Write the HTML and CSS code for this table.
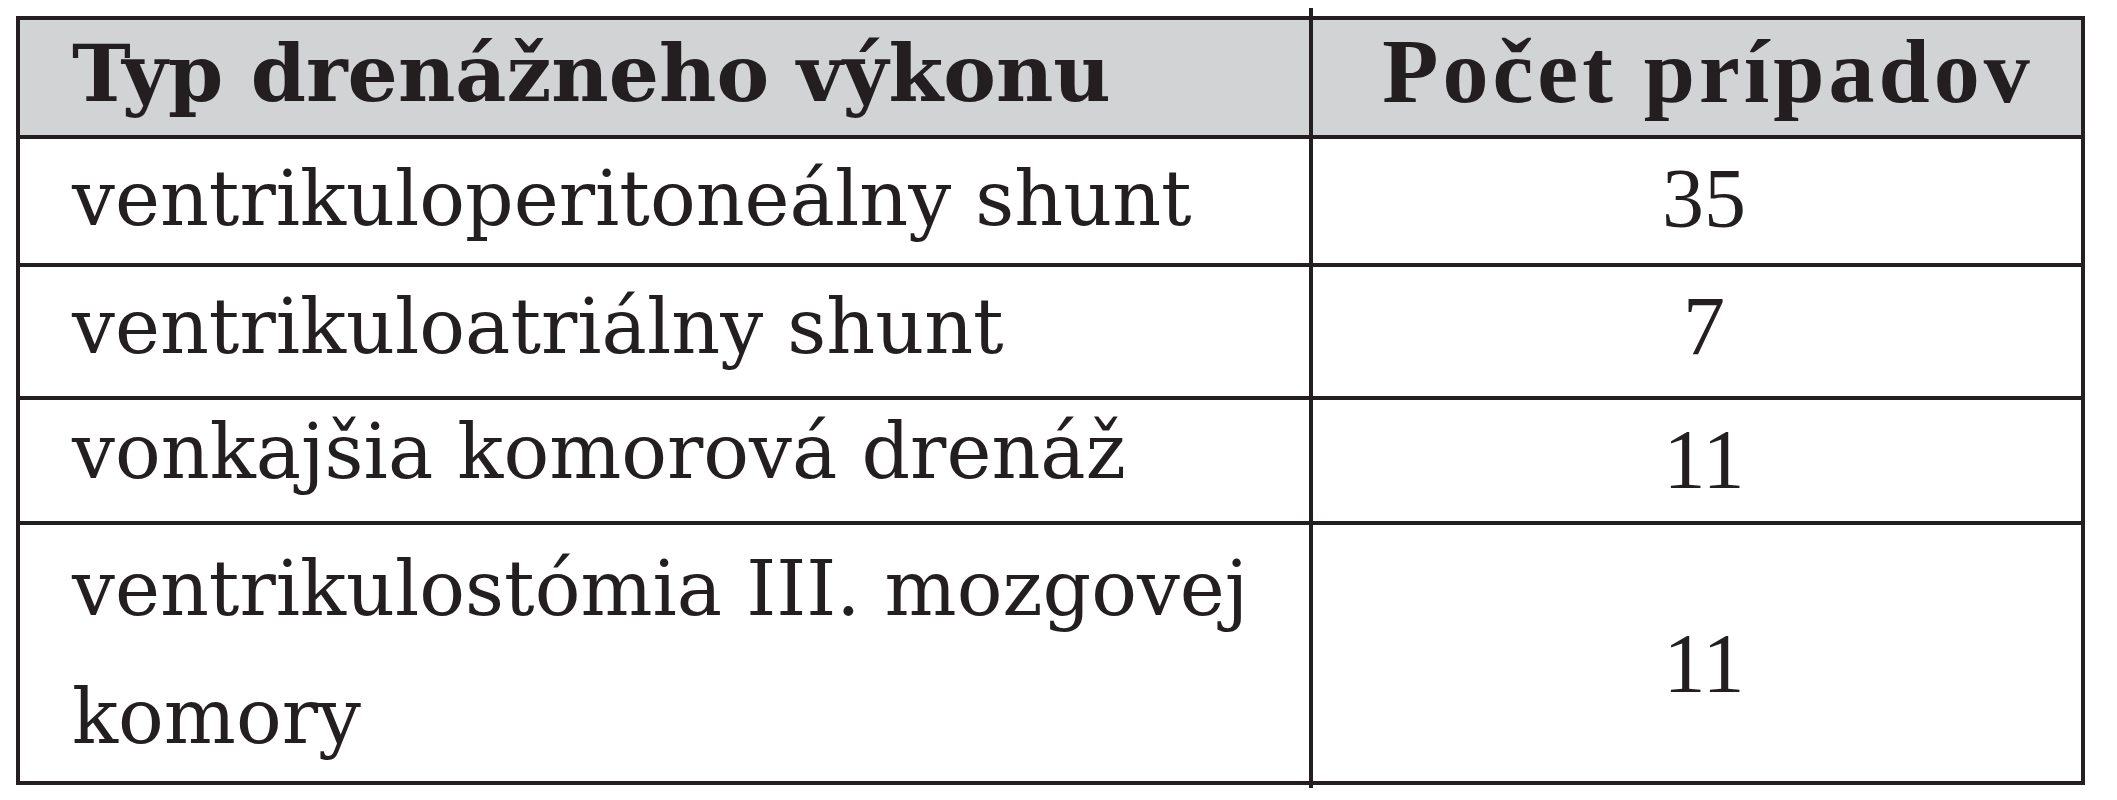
FILE: index.html
```html
<!DOCTYPE html>
<html lang="sk">
<head>
<meta charset="utf-8">
<title>Typ drenážneho výkonu</title>
<link rel="stylesheet" href="styles.css">
</head>
<body>
<div class="wrap">
  <table class="drain">
    <thead>
      <tr class="head">
        <th class="c1">Typ drenážneho výkonu</th>
        <th class="c2">Počet prípadov</th>
      </tr>
    </thead>
    <tbody>
      <tr class="r1">
        <td class="c1">ventrikuloperitoneálny shunt</td>
        <td class="c2 num">35</td>
      </tr>
      <tr class="r2">
        <td class="c1">ventrikuloatriálny shunt</td>
        <td class="c2 num">7</td>
      </tr>
      <tr class="r3">
        <td class="c1">vonkajšia komorová drenáž</td>
        <td class="c2 num">11</td>
      </tr>
      <tr class="r4">
        <td class="c1 two">ventrikulostómia III. mozgovej<br>komory</td>
        <td class="c2 num low">11</td>
      </tr>
    </tbody>
  </table>
</div>
</body>
</html>
```

FILE: styles.css
```css
html, body {
  margin: 0;
  padding: 0;
  background: #ffffff;
}

body {
  width: 2117px;
  height: 800px;
  overflow: hidden;
}

.wrap {
  position: relative;
  padding: 16px 0 0 16px;
}

/* vertical divider that runs past the table frame */
.wrap::after {
  content: "";
  position: absolute;
  left: 1309px;
  top: 8px;
  width: 4px;
  height: 780px;
  background: #231f20;
}

.drain {
  box-sizing: border-box;
  width: 2069px;
  border: 4px solid #231f20;
  border-collapse: separate;
  border-spacing: 0;
  table-layout: fixed;
  color: #231f20;
}

.drain th,
.drain td {
  padding: 0;
  vertical-align: top;
  border-bottom: 4px solid #231f20;
}

.drain tbody tr:last-child td {
  border-bottom: 0;
}

.drain .c1 {
  box-sizing: border-box;
  width: 1293px;
  border-right: 4px solid #231f20;
  padding-left: 52px;
  text-align: left;
  font-family: "DejaVu Serif", "Liberation Serif", serif;
  font-size: 76px;
  font-weight: normal;
  line-height: 120px;
  white-space: nowrap;
}

.drain .c2 {
  padding-left: 14px;
  text-align: center;
  font-family: "Liberation Serif", "DejaVu Serif", serif;
}

.drain .head th {
  background: #d1d3d4;
  height: 115px;
}

.drain .head .c1 {
  font-size: 79px;
  font-weight: bold;
  line-height: 108px;
}

.drain .head .c2 {
  font-size: 92px;
  font-weight: bold;
  letter-spacing: 4px;
  line-height: 102px;
  padding-left: 22px;
}

.drain .num {
  font-size: 84px;
  line-height: 120px;
}

.drain .r1 td { height: 124px; }
.drain .r2 td { height: 129px; }
.drain .r3 td { height: 121px; }
.drain .r4 td { height: 251px; }

.drain .r3 .c1 { line-height: 104px; }

.drain .r4 .two {
  line-height: 128px;
}

.drain .r4 .low {
  height: 172px;
  padding-top: 79px;
}
```
